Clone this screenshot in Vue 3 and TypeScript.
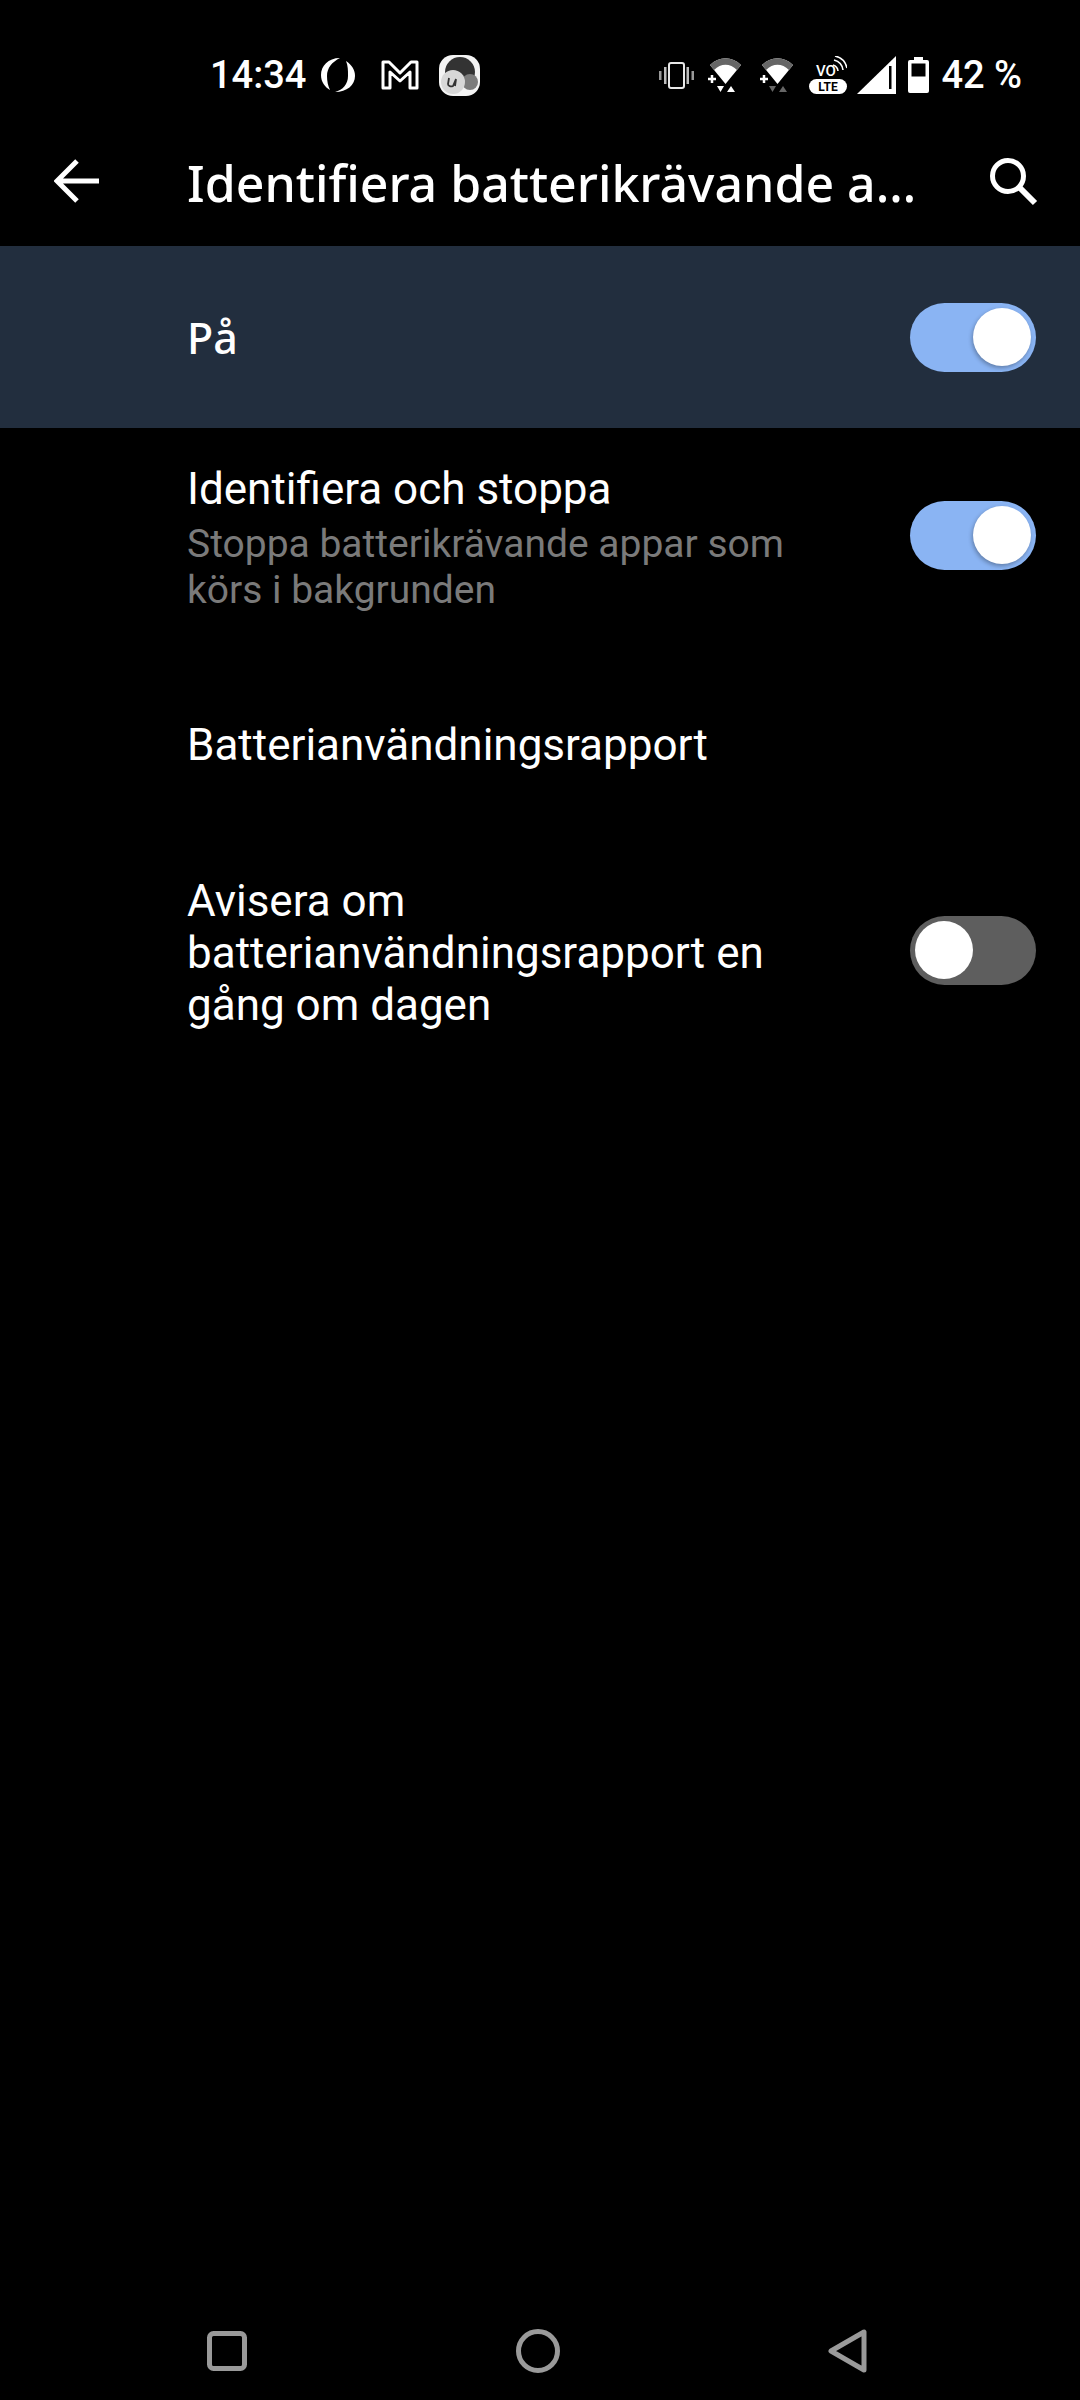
<template>
  <div class="page">
    <div class="statusbar">
      <div class="status-left">
        <span class="clock">14:34</span>
        <svg class="ic-sync" width="36" height="36" viewBox="0 0 36 36">
          <path d="M20 1C8 1 1 9 1 18C1 25 5 30 10 33C8 29 7 24 7 19C7 11 12 5 20 1Z" fill="#fff" />
          <path d="M26 4C32 8 35 13 35 19C35 28 27 35 15 35C23 33 28 27 28 19C28 13 28 9 26 4Z" fill="#fff" />
        </svg>
        <svg class="ic-mail" width="38" height="30" viewBox="0 0 38 30">
          <path d="M2 28V2h6l11 11L30 2h6v26h-7V12l-10 9-10-9v16z" fill="none" stroke="#fff" stroke-width="3" stroke-linejoin="round" />
        </svg>
        <svg class="ic-app" width="41" height="41" viewBox="0 0 41 41">
          <rect x="0" y="0" width="41" height="41" rx="14" fill="#f4f4f4" />
          <circle cx="21" cy="17" r="15" fill="#333" />
          <circle cx="31" cy="27" r="8" fill="#7c7c7c" />
          <circle cx="14" cy="27" r="12" fill="#d8d8d8" />
          <path d="M10 23l-1 6c0 2 3 3 5 2l3-7M17 24l-1 7" fill="none" stroke="#333" stroke-width="1.8" />
        </svg>
      </div>
      <div class="status-right">
        <svg width="35" height="27" viewBox="0 0 35 27">
          <rect x="10" y="1" width="15" height="25" rx="2" fill="none" stroke="#e8e8e8" stroke-width="2" />
          <rect x="5" y="5" width="2.5" height="17" fill="#bbb" />
          <rect x="0" y="9" width="2.5" height="9" fill="#999" />
          <rect x="27.5" y="5" width="2.5" height="17" fill="#bbb" />
          <rect x="32.5" y="9" width="2.5" height="9" fill="#999" />
        </svg>
        <svg class="wifi-a" width="35" height="36" viewBox="0 0 35 36">
          <path d="M3 8 C12 -1 25 -1 34 8 L18.500 27Z" fill="#fff" />
          <path d="M3 8 C12 -1 25 -1 34 8 L30 13 C23 6 14 6 7 13Z" fill="#666" />
          <path d="M1 22h8M5 18v8" stroke="#fff" stroke-width="2.500" />
          <path d="M10 29h7l-3.500 6z" fill="#fff" />
          <path d="M20 35l4-6 4 6z" fill="#fff" />
        </svg>
        <svg class="wifi-b" width="35" height="36" viewBox="0 0 35 36">
          <path d="M3 8 C12 -1 25 -1 34 8 L18.500 27Z" fill="#fff" />
          <path d="M3 8 C12 -1 25 -1 34 8 L30 13 C23 6 14 6 7 13Z" fill="#666" />
          <path d="M1 22h8M5 18v8" stroke="#fff" stroke-width="2.500" />
          <path d="M10 29h7l-3.500 6z" fill="#666" />
          <path d="M20 35l4-6 4 6z" fill="#666" />
        </svg>
        <svg class="volte" width="38" height="38" viewBox="0 0 38 38">
          <text x="7" y="20" class="vo">VO</text>
          <path d="M24 9a7 7 0 0 1 5 6M25 4a12 12 0 0 1 9 10M26 0a16 16 0 0 1 12 12" fill="none" stroke="#fff" stroke-width="1.600" />
          <rect x="0" y="23" width="38" height="15" rx="7.500" fill="#fff" />
          <text x="19" y="34.500" text-anchor="middle" class="lte">LTE</text>
        </svg>
        <svg class="signal" width="39" height="38" viewBox="0 0 39 38">
          <path d="M39 0V38H0Z" fill="#fff" />
          <rect x="32" y="10" width="2.500" height="23" fill="#000" />
        </svg>
        <svg class="batt-icon" width="21" height="36" viewBox="0 0 21 36">
          <path d="M6 0h9v3h4a2 2 0 0 1 2 2v29a2 2 0 0 1-2 2H2a2 2 0 0 1-2-2V5a2 2 0 0 1 2-2h4z" fill="#fff" />
          <rect x="3.500" y="6.500" width="14" height="13" fill="#000" />
        </svg>
        <span class="battery">42 %</span>
      </div>
    </div>

    <div class="toolbar">
      <svg class="back" width="46" height="46" viewBox="0 0 46 46">
        <path d="M3 23H45M23 3L3 23L23 43" fill="none" stroke="#fff" stroke-width="5" />
      </svg>
      <div class="title">Identifiera batterikrävande appar</div>
      <svg class="search" width="50" height="50" viewBox="0 0 50 50">
        <circle cx="20" cy="20" r="15.500" fill="none" stroke="#fff" stroke-width="5" />
        <path d="M31 31L47 47" stroke="#fff" stroke-width="6" />
      </svg>
    </div>

    <div class="list">
      <div class="row master">
        <div class="master-label">På</div>
        <div class="switch on"><span class="thumb"></span></div>
      </div>

      <div class="row stop">
        <div class="text">
          <div class="item-title">Identifiera och stoppa</div>
          <div class="item-sub">Stoppa batterikrävande appar som körs i bakgrunden</div>
        </div>
        <div class="switch on"><span class="thumb"></span></div>
      </div>

      <div class="row report">
        <div class="text">
          <div class="item-title">Batterianvändningsrapport</div>
        </div>
      </div>

      <div class="row notify">
        <div class="text">
          <div class="item-title">Avisera om batterianvändningsrapport en gång om dagen</div>
        </div>
        <div class="switch"><span class="thumb"></span></div>
      </div>
    </div>

    <div class="navbar">
      <svg width="40" height="40" viewBox="0 0 40 40">
        <rect x="2.500" y="2.500" width="35" height="35" rx="4" fill="none" stroke="#9a9a9a" stroke-width="5" />
      </svg>
      <svg width="44" height="44" viewBox="0 0 44 44">
        <circle cx="22" cy="22" r="19.500" fill="none" stroke="#9a9a9a" stroke-width="5" />
      </svg>
      <svg width="40" height="44" viewBox="0 0 40 44">
        <path d="M36 3V41L3 22Z" fill="none" stroke="#9a9a9a" stroke-width="5" stroke-linejoin="round" />
      </svg>
    </div>
  </div>
</template>

<script setup lang="ts">
</script>

<style>
html,
body {
  background: #000;
}
</style>

<style scoped>
.page {
  width: 1080px;
  height: 2400px;
  display: flex;
  flex-direction: column;
  background: #000;
  color: #fff;
  font-family: Roboto, sans-serif;
}

.statusbar {
  height: 120px;
  box-sizing: border-box;
  padding: 30px 58px 0 210px;
  display: flex;
  justify-content: space-between;
  align-items: center;
}

.status-left,
.status-right {
  display: flex;
  align-items: center;
}

.clock {
  font-size: 38px;
  font-weight: 500;
  width: 110px;
}

.ic-mail {
  margin-left: 25px;
}

.ic-app {
  margin-left: 20px;
}

.wifi-a {
  margin-left: 13px;
}

.wifi-b {
  margin-left: 17px;
}

.volte {
  margin-left: 15px;
}

.signal {
  margin-left: 10px;
}

.batt-icon {
  margin-left: 12px;
}

.vo {
  font: 500 15px Roboto, sans-serif;
  fill: #fff;
}

.lte {
  font: 700 12px Roboto, sans-serif;
  fill: #000;
}

.battery {
  margin-left: 12px;
  font-size: 38px;
  font-weight: 500;
  white-space: pre;
}

.toolbar {
  height: 126px;
  display: flex;
  align-items: center;
}

.back {
  margin-left: 54px;
  margin-bottom: 5px;
}

.title {
  margin-left: 87px;
  width: 735px;
  font-family: "Noto Sans", sans-serif;
  font-size: 50px;
  font-weight: 500;
  white-space: nowrap;
  overflow: hidden;
  text-overflow: ellipsis;
}

.search {
  margin-left: 66px;
  margin-bottom: 5px;
}

.list {
  flex: 1;
}

.row {
  display: flex;
  align-items: center;
  justify-content: space-between;
  padding: 0 44px 0 187px;
}

.master {
  height: 182px;
  background: #222e3e;
}

.master-label {
  font-family: "Noto Sans", sans-serif;
  font-size: 43px;
  font-weight: 500;
}

.text {
  width: 640px;
  padding-top: 5px;
}

.stop {
  height: 214px;
}

.report {
  height: 200px;
}

.notify {
  height: 216px;
}

.item-title {
  font-size: 44px;
  line-height: 52px;
}

.item-sub {
  margin-top: 6px;
  font-size: 39px;
  line-height: 46px;
  color: #7a7a7a;
}

.switch {
  width: 126px;
  height: 69px;
  flex: none;
  border-radius: 35px;
  background: #5e5e5e;
  display: flex;
  align-items: center;
  padding: 0 5px;
  box-sizing: border-box;
}

.switch.on {
  background: #8ab4f3;
  justify-content: flex-end;
}

.thumb {
  width: 58px;
  height: 58px;
  border-radius: 50%;
  background: #fff;
}

.switch.on .thumb {
  box-shadow: -1px 2px 4px rgba(0, 0, 0, 0.3);
}

.navbar {
  height: 98px;
  display: flex;
  align-items: center;
  justify-content: space-between;
  padding: 0 212px 0 207px;
}
</style>
